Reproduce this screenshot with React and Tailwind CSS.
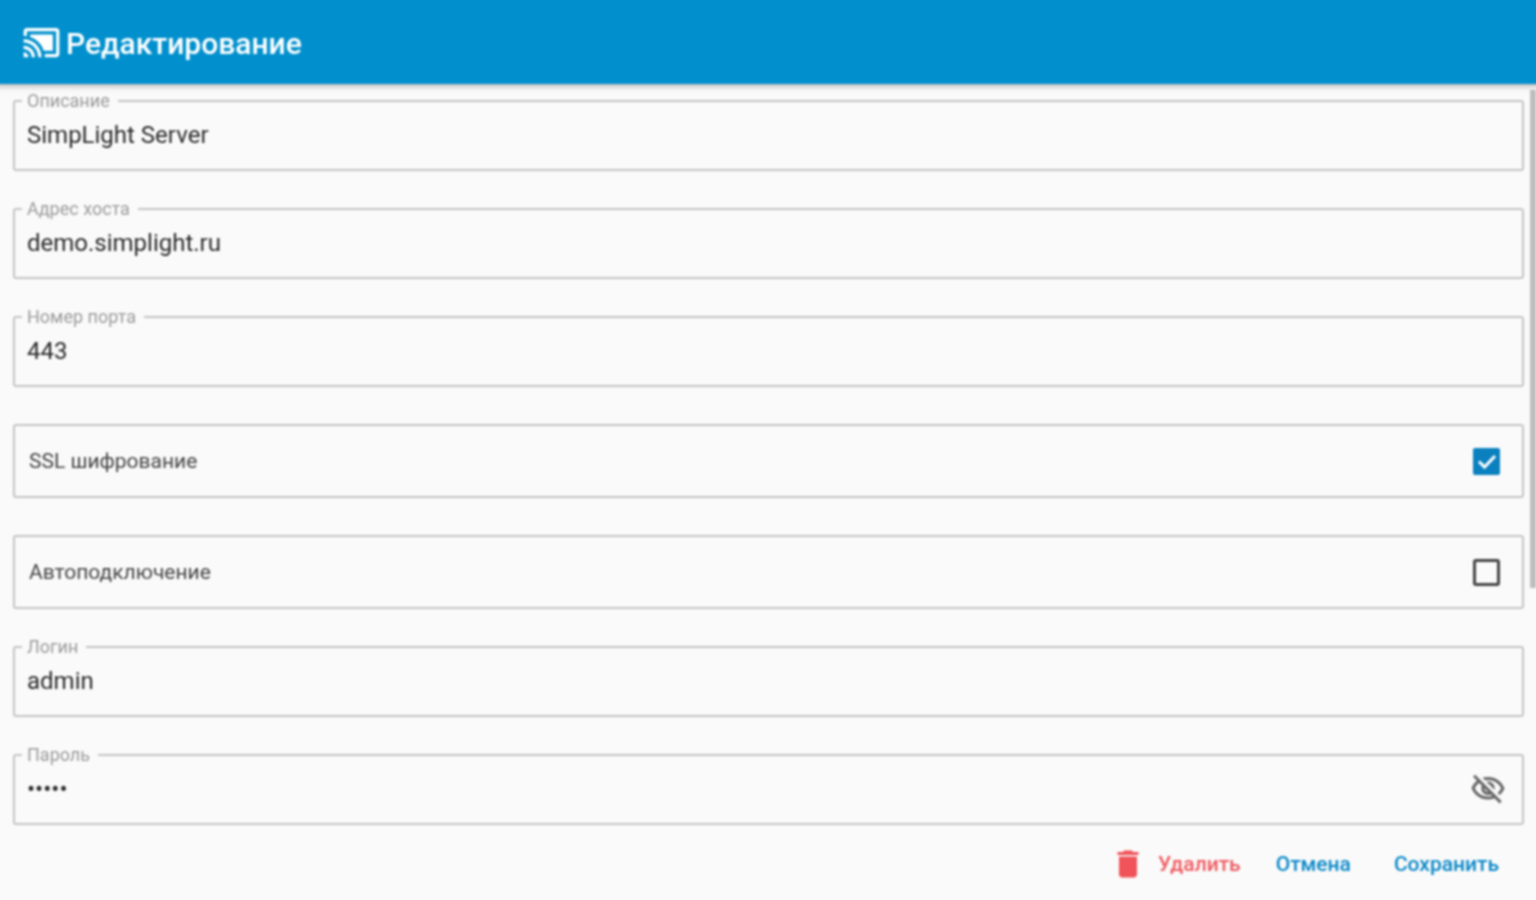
const CAST = "M1 18v3h3c0-1.66-1.34-3-3-3zm0-4v2c2.76 0 5 2.24 5 5h2c0-3.87-3.13-7-7-7zm18-7H5v1.63c3.96 1.28 7.09 4.41 8.37 8.37H19V7zM1 10v2c4.97 0 9 4.03 9 9h2c0-6.08-4.93-11-11-11zm20-7H3c-1.1 0-2 .9-2 2v3h2V5h18v14h-7v2h7c1.1 0 2-.9 2-2V5c0-1.1-.9-2-2-2z";
const EYE = "M12 6c3.79 0 7.17 2.13 8.82 5.5-.59 1.22-1.42 2.27-2.41 3.12l1.41 1.41c1.39-1.23 2.49-2.77 3.18-4.53C21.27 7.11 17 4 12 4c-1.27 0-2.49.2-3.64.57l1.65 1.65C10.66 6.09 11.32 6 12 6zm-1.07 1.14L13 9.21c.57.25 1.03.71 1.28 1.28l2.07 2.07c.08-.34.14-.7.14-1.07C16.5 9.01 14.48 7 12 7c-.37 0-.72.05-1.07.14zM2.01 3.87l2.68 2.68C3.06 7.83 1.77 9.53 1 11.5 2.73 15.89 7 19 12 19c1.52 0 2.98-.29 4.32-.82l3.42 3.42 1.41-1.41L3.42 2.45 2.01 3.87zm7.5 7.5l2.61 2.61c-.04.01-.08.02-.12.02-1.38 0-2.5-1.12-2.5-2.5 0-.05.01-.08.01-.13zm-3.4-3.4l1.75 1.75c-.23.55-.36 1.15-.36 1.78 0 2.48 2.02 4.5 4.5 4.5.63 0 1.23-.13 1.77-.36l.98.98c-.88.24-1.8.38-2.75.38-3.79 0-7.17-2.13-8.82-5.5.7-1.43 1.72-2.61 2.93-3.53z";
const TRASH = "M6 19c0 1.1.9 2 2 2h8c1.1 0 2-.9 2-2V7H6v12zM19 4h-3.5l-1-1h-5l-1 1H5v2h14V4z";

function Field({ label, value, children, className = "" }) {
  return (
    <fieldset className={`h-[79px] border-2 border-[#c4c4c4] rounded-[3px] px-[7px] flex-none ${className}`}>
      <legend className="pl-[5px] pr-[8px] ml-0 text-[18px] leading-[18px] text-[#9a9a9a]">{label}</legend>
      <div className="flex items-center justify-between h-[52px] -mt-[1px] pl-[5px] pr-[9px]">
        <span className="text-[24px] leading-[28px] text-[#2a2a2a]">{value}</span>
        {children}
      </div>
    </fieldset>
  );
}

function CheckRow({ label, checked, className = "" }) {
  return (
    <div className={`h-[74px] border-2 border-[#c4c4c4] rounded-[3px] flex items-center justify-between pl-[14px] pr-[22px] flex-none ${className}`}>
      <span className="text-[21px] leading-[24px] text-[#444444]">{label}</span>
      {checked ? (
        <span className="w-[27px] h-[27px] bg-[#0a80bf] rounded-[2px] flex items-center justify-center">
          <svg viewBox="0 0 24 24" className="w-[24px] h-[24px]" fill="none" stroke="#ffffff" strokeWidth="3">
            <path d="M4 12.5l5.5 5.5L20 7" />
          </svg>
        </span>
      ) : (
        <span className="w-[27px] h-[27px] border-[3px] border-[#444444] rounded-[3px] bg-transparent" />
      )}
    </div>
  );
}

export default function App() {
  return (
    <div className="relative h-[900px] overflow-hidden bg-[#fafafa] font-['Roboto',sans-serif]">
      <div className="relative -mx-[4px] -mt-[4px] h-[908px] bg-[#fafafa] blur-[0.8px]">
        <header className="relative z-10 h-[88px] pt-[4px] bg-[#0190cd] shadow-[0_2px_6px_rgba(0,0,0,0.3)] flex items-center pl-[26px] gap-[5px] text-white">
          <svg viewBox="0 0 24 24" className="w-[39px] h-[39px] flex-none" fill="#ffffff"><path d={CAST} /></svg>
          <h1 className="text-[30px] leading-[32px] font-medium pt-[3px]">Редактирование</h1>
        </header>
        <main className="pl-[17px] pr-[16px] pt-[8px] flex flex-col">
          <Field label="Описание" value="SimpLight Server" />
          <Field label="Адрес хоста" value="demo.simplight.ru" className="mt-[29px]" />
          <Field label="Номер порта" value="443" className="mt-[29px]" />
          <CheckRow label="SSL шифрование" checked className="mt-[37px]" />
          <CheckRow label="Автоподключение" className="mt-[37px]" />
          <Field label="Логин" value="admin" className="mt-[29px]" />
          <Field label="Пароль" value="•••••" className="mt-[29px]">
            <svg viewBox="0 0 24 24" className="w-[36px] h-[36px] flex-none" fill="#666666"><path d={EYE} /></svg>
          </Field>
          <div className="flex items-center justify-end h-[36px] mt-[21px] pr-[25px] text-[21px] leading-[24px] font-medium">
            <svg viewBox="0 0 24 24" className="w-[36px] h-[36px] flex-none mr-[12px]" fill="#f0545a"><path d={TRASH} /></svg>
            <span className="text-[#ef5a60]">Удалить</span>
            <span className="ml-[35px] text-[#0a88c8]">Отмена</span>
            <span className="ml-[43px] text-[#0a88c8]">Сохранить</span>
          </div>
        </main>
        <div className="absolute right-[4px] top-[94px] w-[6px] h-[498px] bg-[#bdbdbd]" />
      </div>
    </div>
  );
}
